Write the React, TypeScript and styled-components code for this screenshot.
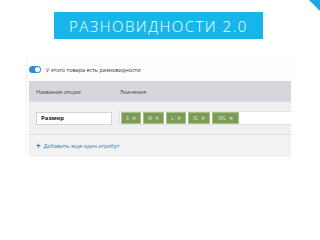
import React from "react";
import styled, { createGlobalStyle } from "styled-components";

const GlobalStyle = createGlobalStyle`
  html, body {
    margin: 0;
    padding: 0;
    background: #ffffff;
  }
  body {
    width: 320px;
    height: 240px;
    overflow: hidden;
    font-family: "Open Sans", "Liberation Sans", sans-serif;
  }
`;

const Slide = styled.div`
  position: relative;
  width: 320px;
  height: 240px;
  display: flex;
  flex-direction: column;
`;

const Corner = styled.div`
  position: absolute;
  top: 0;
  right: 0;
  width: 0;
  height: 0;
  border-top: 11px solid #1aa9e6;
  border-left: 11px solid transparent;
`;

const Banner = styled.div`
  margin: 12px 0 0 54px;
  width: 209px;
  height: 27px;
  background: #16b6ea;
  color: #ffffff;
  display: flex;
  align-items: center;
  padding-left: 15px;
  box-sizing: border-box;
  font-size: 15px;
  font-weight: 300;
  letter-spacing: 1.5px;
  white-space: nowrap;
`;

const Panel = styled.div`
  margin: 19px 0 0 26px;
  width: 265px;
  display: flex;
  flex-direction: column;
  border-left: 1px solid #f2f2f2;
  background: #fdfdfd;
`;

const ToggleRow = styled.div`
  height: 23px;
  display: flex;
  align-items: center;
  gap: 5px;
  padding-left: 2px;
  font-size: 5.5px;
  color: #333;
`;

const Switch = styled.div`
  width: 12px;
  height: 7px;
  border-radius: 4px;
  background: #2b8fd9;
  display: flex;
  align-items: center;
  justify-content: flex-end;
  padding: 0 1px;
  box-sizing: border-box;
`;

const Knob = styled.div`
  width: 5px;
  height: 5px;
  border-radius: 50%;
  background: #ffffff;
`;

const HeaderRow = styled.div`
  height: 21px;
  margin: 0 1px 0 2px;
  background: #d6d7db;
  display: grid;
  grid-template-columns: 84px 1fr;
  align-items: center;
  padding-left: 7px;
  font-size: 5.5px;
  color: #444;
`;

const OptionRow = styled.div`
  height: 33px;
  margin: 0 1px 0 2px;
  background: #f0f0f0;
  border-bottom: 1px solid #dcdcdc;
  display: flex;
  align-items: center;
  gap: 7px;
  padding-left: 7px;
  box-sizing: border-box;
`;

const NameInput = styled.div`
  width: 76px;
  height: 13px;
  background: #ffffff;
  border: 1px solid #d4d4d4;
  box-sizing: border-box;
  display: flex;
  align-items: center;
  padding-left: 4px;
  font-size: 6px;
  font-weight: 700;
  color: #222;
`;

const TagsInput = styled.div`
  flex: 1;
  height: 14px;
  background: #ffffff;
  border: 1px solid #e2e2e2;
  border-right: none;
  box-sizing: border-box;
  display: flex;
  align-items: center;
  gap: 2px;
  padding-left: 1px;
`;

const Tag = styled.div<{ $w: number }>`
  width: ${(p) => p.$w}px;
  height: 12px;
  background: #7c9b57;
  border: 1px solid #a9c189;
  box-sizing: border-box;
  display: flex;
  align-items: center;
  justify-content: center;
  gap: 3px;
  font-size: 4.5px;
  color: #e4edd6;
`;

const Close = styled.span`
  font-size: 5px;
  color: #eef3e6;
`;

const Footer = styled.div`
  height: 22px;
  margin: 0 1px 0 2px;
  background: #f2f2f2;
  display: flex;
  align-items: center;
  gap: 3px;
  padding-left: 7px;
  font-size: 5.5px;
  color: #3579b8;
`;

const Plus = styled.span`
  font-size: 8px;
  font-weight: 700;
  line-height: 1;
`;

const tags = [
  { label: "S", w: 20 },
  { label: "M", w: 21 },
  { label: "L", w: 20 },
  { label: "XL", w: 22 },
  { label: "XXL", w: 27 },
];

export default function App() {
  return (
    <>
      <GlobalStyle />
      <Slide>
        <Corner />
        <Banner>РАЗНОВИДНОСТИ 2.0</Banner>
        <Panel>
          <ToggleRow>
            <Switch>
              <Knob />
            </Switch>
            У этого товара есть разновидности
          </ToggleRow>
          <HeaderRow>
            <span>Название опции</span>
            <span>Значение</span>
          </HeaderRow>
          <OptionRow>
            <NameInput>Размер</NameInput>
            <TagsInput>
              {tags.map((t) => (
                <Tag key={t.label} $w={t.w}>
                  {t.label}
                  <Close>✕</Close>
                </Tag>
              ))}
            </TagsInput>
          </OptionRow>
          <Footer>
            <Plus>+</Plus>
            Добавить еще один атрибут
          </Footer>
        </Panel>
      </Slide>
    </>
  );
}
